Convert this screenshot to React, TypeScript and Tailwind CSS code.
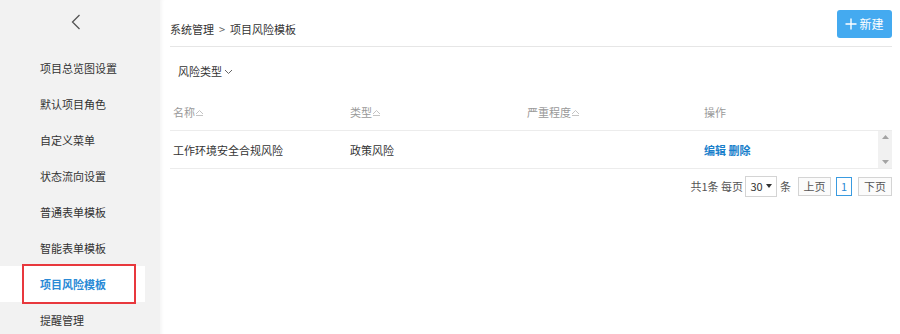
import React from 'react';

const menu = ['项目总览图设置', '默认项目角色', '自定义菜单', '状态流向设置', '普通表单模板', '智能表单模板', '项目风险模板', '提醒管理'];

const font = { fontFamily: '"Noto Sans CJK SC", "Noto Sans", sans-serif' };

function SortIcon() {
    return (
        <svg width="9" height="8" viewBox="0 0 9 8">
            <path d="M1 5 L4.5 1.5 L8 5" fill="none" stroke="#c4c4c4" strokeWidth="1" />
            <path d="M1 6.5 H8" stroke="#c4c4c4" strokeWidth="1" />
        </svg>
    );
}

export default function App() {
    return (
        <div className="w-[900px] h-[334px] flex flex-col overflow-hidden bg-white text-[11px] text-[#333]" style={font}>
            <div className="h-[2px] bg-[#1f8ad2]" />
            <div className="flex flex-1">
                {/* sidebar */}
                <div className="w-[160px] bg-[#f2f2f2] flex flex-col">
                    <div className="h-[50px] flex justify-center pt-[14px]">
                        <svg width="10" height="16" viewBox="0 0 10 16" className="-ml-[8px]">
                            <path d="M8.5 1 L1.5 8 L8.5 15" fill="none" stroke="#555" strokeWidth="1.3" />
                        </svg>
                    </div>
                    {menu.map((m) =>
                        m === '项目风险模板' ? (
                            <div key={m} className="relative h-[36px] w-[145px] bg-white flex items-center pl-[40px] font-bold text-[#2a8ad6]">
                                {m}
                                <div className="absolute left-[22px] right-[9px] -top-[2px] -bottom-[2px] border-2 border-[#e8383d]" />
                            </div>
                        ) : (
                            <div key={m} className="h-[36px] flex items-center pl-[40px]">
                                {m}
                            </div>
                        )
                    )}
                </div>

                {/* main */}
                <div className="flex-1 flex flex-col pl-[10px] pr-[8px] shadow-[inset_4px_0_4px_-3px_rgba(0,0,0,0.06)]">
                    <div className="h-[47px] flex items-start justify-between border-b border-[#e6e6e6]">
                        <div className="mt-[21px] leading-[16px] flex">
                            系统管理<span className="mx-[5px] text-[#666]">&gt;</span>项目风险模板
                        </div>
                        <button className="mt-[10px] h-[28px] w-[55px] rounded-[3px] bg-[#44aaf0] text-white text-[12px] flex items-center justify-center gap-[2px]">
                            <svg width="12" height="12" viewBox="0 0 12 12">
                                <path d="M6 0.5 V11.5 M0.5 6 H11.5" stroke="#fff" strokeWidth="1.4" />
                            </svg>
                            新建
                        </button>
                    </div>

                    <div className="h-[48px] flex items-center pl-[8px] gap-[2px]">
                        风险类型
                        <svg width="9" height="6" viewBox="0 0 9 6" className="mt-[1px]">
                            <path d="M1 1 L4.5 4.5 L8 1" fill="none" stroke="#666" strokeWidth="1" />
                        </svg>
                    </div>

                    <div className="h-[36px] flex items-center border-b border-[#ececec] text-[#999]">
                        <div className="w-[177px] pl-[3px] flex items-center">名称<SortIcon /></div>
                        <div className="w-[177px] pl-[3px] flex items-center">类型<SortIcon /></div>
                        <div className="w-[177px] pl-[3px] flex items-center">严重程度<SortIcon /></div>
                        <div className="w-[177px] pl-[3px]">操作</div>
                    </div>

                    <div className="h-[38px] flex border-b border-[#ececec]">
                        <div className="w-[708px] flex items-center pt-[2px]">
                            <div className="w-[177px] pl-[3px]">工作环境安全合规风险</div>
                            <div className="w-[177px] pl-[3px]">政策风险</div>
                            <div className="w-[177px] pl-[3px]" />
                            <div className="w-[177px] pl-[3px] font-bold text-[#1a7fcb]">编辑 删除</div>
                        </div>
                        <div className="flex-1 bg-[#f1f1f1] flex flex-col items-center justify-between py-[4px]">
                            <svg width="7" height="4" viewBox="0 0 7 4"><path d="M0 4 L3.5 0 L7 4 Z" fill="#a3a3a3" /></svg>
                            <svg width="7" height="4" viewBox="0 0 7 4"><path d="M0 0 L3.5 4 L7 0 Z" fill="#a3a3a3" /></svg>
                        </div>
                    </div>

                    <div className="h-[34px] flex items-center justify-end text-[#555]">
                        <span>共1条 每页</span>
                        <div className="ml-[2px] h-[21px] w-[32px] border border-[#d4d4d4] flex items-center justify-center gap-[3px] text-[#333]">
                            30
                            <svg width="6" height="4" viewBox="0 0 6 4"><path d="M0 0 L3 4 L6 0 Z" fill="#333" /></svg>
                        </div>
                        <span className="ml-[3px]">条</span>
                        <div className="ml-[7px] h-[19px] w-[33px] border border-[#d4d4d4] bg-[#fbfbfb] flex items-center justify-center">上页</div>
                        <div className="ml-[5px] h-[19px] w-[16px] border border-[#3a9be0] flex items-center justify-center text-[#2a8ad6]">1</div>
                        <div className="ml-[6px] h-[19px] w-[34px] border border-[#d4d4d4] bg-[#fbfbfb] flex items-center justify-center">下页</div>
                    </div>
                </div>
            </div>
        </div>
    );
}
